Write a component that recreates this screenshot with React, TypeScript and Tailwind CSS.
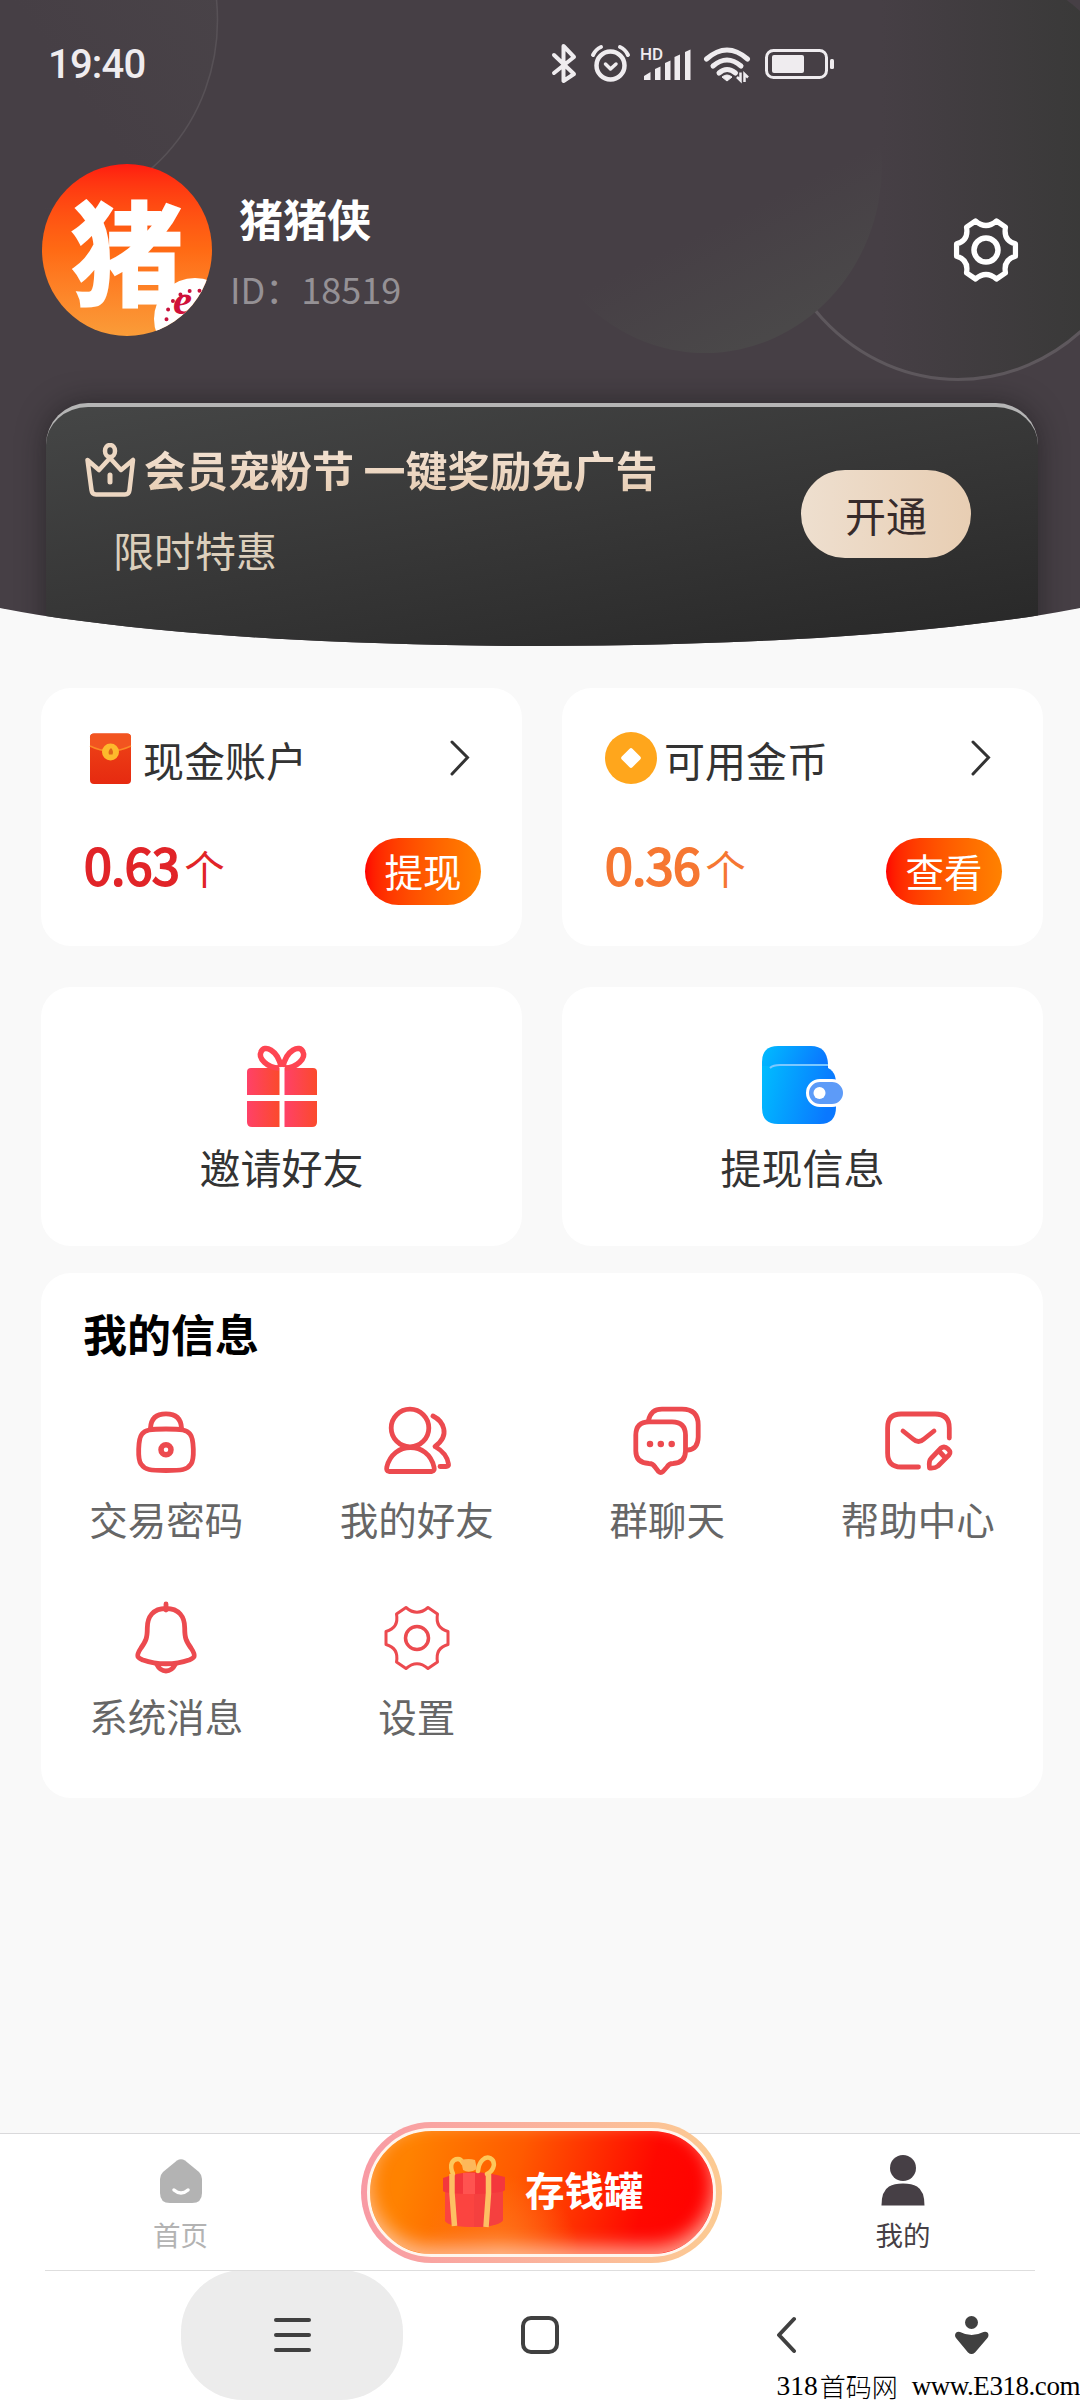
import type { ReactNode } from 'react'

const gearPath =
  'M-11 -30.5 Q0 -21 11 -30.5 L20.5 -24 Q18 -10 31 -6.5 L31 6.5 Q18 10 20.5 24 L11 30.5 Q0 21 -11 30.5 L-20.5 24 Q-18 10 -31 6.5 L-31 -6.5 Q-18 -10 -20.5 -24 Z'

function StatusBar() {
  return (
    <div className="flex h-32 items-center pl-[48px]">
      <span className="mt-[2px] w-[502px] font-['Roboto'] text-[40px] font-medium tracking-[-0.8px] text-[#efecef]">
        19:40
      </span>
      <svg width="290" height="40" viewBox="550 44 290 40" fill="none" stroke="#efecef">
        <path
          d="M554 55 L574 74 L563.5 81 V46 L574 57 L554 73"
          strokeWidth="4"
          strokeLinejoin="round"
          strokeLinecap="round"
        />
        <circle cx="610.5" cy="65.5" r="14" strokeWidth="4.5" />
        <path d="M605.5 64 l5 5 5.5-5" strokeWidth="3.5" strokeLinecap="round" strokeLinejoin="round" />
        <path d="M593 55 q3-6 8-8 M628 55 q-3-6-8-8" strokeWidth="4" strokeLinecap="round" />
        <text
          x="640"
          y="60"
          fill="#efecef"
          stroke="none"
          fontFamily="Roboto"
          fontWeight="500"
          fontSize="17"
        >
          HD
        </text>
        <g fill="#efecef" stroke="none">
          <path d="M644 80 v-4 l6.5-4 v8z" />
          <path d="M655 80 v-11 l5.5-2.500 v13.5z" />
          <path d="M665 80 v-17 l5.5-2.500 v19.5z" />
          <path d="M674.500 80 v-23 l5.500-2.500 v25.500z" />
          <path d="M685 80 v-28 l5.500-2.500 v30.500z" />
        </g>
        <g strokeWidth="5" strokeLinecap="round">
          <path d="M706.500 59 Q727 41 747.500 59" />
          <path d="M713 66 Q727 54 741 66" />
          <path d="M719 73 Q727 66 735.500 73" />
        </g>
        <path d="M722 77 q5-4 10 0 l-5 4z" fill="#efecef" strokeWidth="1" />
        <path d="M737 77 l3.500 3.500 v-8 M744.500 82 v-8 l3.500 3.500" strokeWidth="2.500" />
        <rect x="766.500" y="50.500" width="60" height="27" rx="7" strokeWidth="3" />
        <rect x="772" y="55" width="32" height="18" rx="2" fill="#efecef" stroke="none" />
        <rect x="830" y="59" width="4" height="10" rx="1.500" fill="#efecef" stroke="none" />
      </svg>
    </div>
  )
}

function HeaderCircles() {
  return (
    <svg className="absolute top-0 left-[108px]" width="1080" height="400" fill="none">
      <defs>
        <linearGradient id="circleRight" x1="0.3" x2="0.85" y1="0" y2="0">
          <stop offset="0" stopColor="#463f45" />
          <stop offset="1" stopColor="#393938" />
        </linearGradient>
        <linearGradient id="circleMid" gradientUnits="userSpaceOnUse" x1="735" x2="790" y1="215" y2="325">
          <stop offset="0" stopColor="#463f45" />
          <stop offset="1" stopColor="#4a4849" />
        </linearGradient>
        <linearGradient id="circleLeft" x1="0.6" x2="1" y1="0.7" y2="0.4">
          <stop offset="0" stopColor="#463f45" />
          <stop offset="1" stopColor="#494348" />
        </linearGradient>
        <linearGradient id="leftRingFade" x1="0.5" x2="0.8" y1="0" y2="0">
          <stop offset="0" stopColor="#575156" stopOpacity="0" />
          <stop offset="1" stopColor="#575156" />
        </linearGradient>
        <linearGradient id="ringFade" x1="0" x2="0" y1="0.5" y2="0.75">
          <stop offset="0" stopColor="#5e585d" stopOpacity="0" />
          <stop offset="1" stopColor="#5e585d" />
        </linearGradient>
      </defs>
      <ellipse cx="43.500" cy="20" rx="174" ry="189" fill="url(#circleLeft)" stroke="url(#leftRingFade)" strokeWidth="1.500" />
      <ellipse cx="958" cy="171.500" rx="192" ry="208" fill="url(#circleRight)" stroke="url(#ringFade)" strokeWidth="3" />
      <ellipse cx="705" cy="165" rx="177" ry="188" fill="url(#circleMid)" />
    </svg>
  )
}

function Avatar() {
  return (
    <div className="relative flex h-[172px] w-[170px] items-center justify-center overflow-hidden rounded-[50%] bg-gradient-to-b from-[#ff1a10] via-[#ff6a14] to-[#fa9c38]">
      <span className="-mt-[4px] text-[112px] leading-none font-bold text-white [-webkit-text-stroke:3px_white]">猪</span>
      <div className="absolute top-[114px] left-[112px] h-[82px] w-[82px] rounded-full bg-white">
        <svg width="82" height="82" viewBox="0 0 82 82">
          <circle cx="41" cy="41" r="28.500" fill="none" stroke="#c8123c" strokeWidth="4" strokeDasharray="0 9.900" strokeLinecap="round" />
          <text x="19" y="36" fontFamily="Liberation Serif" fontWeight="700" fontStyle="italic" fontSize="43" fill="#d0103a">
            e
          </text>
        </svg>
      </div>
    </div>
  )
}

function Profile() {
  return (
    <div className="relative mt-9 flex h-[172px] items-center pr-[56px] pl-[42px]">
      <Avatar />
      <div className="mt-[5px] ml-[18px] flex-1">
        <h1 className="ml-[9px] text-[44px] leading-[56px] font-bold text-white">猪猪侠</h1>
        <p className="mt-[14px] text-[36px] leading-[56px] text-[#959195]">ID：18519</p>
      </div>
      <svg width="76" height="76" viewBox="-38 -38 76 76" fill="none" stroke="white" strokeWidth="5.500" strokeLinejoin="round">
        <path d={gearPath} transform="scale(.95)" />
        <circle r="12" />
      </svg>
    </div>
  )
}

function VipCard() {
  return (
    <div className="relative mx-[46px] mt-[67px] flex h-[260px] w-[992px] items-start justify-between rounded-t-[42px] border-t-[4px] border-[#b5b5b5] bg-[linear-gradient(170deg,#454646_0%,#363636_50%,#262626_100%)] pr-[67px] pl-[39px] shadow-[0_0_28px_rgba(20,20,20,0.5)]">
      <div className="pt-[36px]">
        <div className="flex h-[54px] items-center gap-[8px]">
          <svg width="51" height="54" viewBox="0 0 51 54" fill="none" stroke="#edd7c2" strokeWidth="4.500" strokeLinejoin="round">
            <path d="M2.500 17 L14 27 L25 15 L36 27 L48 17 L44.500 47 Q44 51.500 40 51.500 H11 Q7 51.500 6.500 47 Z" />
            <ellipse cx="25" cy="8" rx="5" ry="6" />
            <path d="M25 32 v7" strokeWidth="5" strokeLinecap="round" />
          </svg>
          <span className="-mt-[3px] bg-gradient-to-b from-[#f4e4d6] to-[#e6ccb2] bg-clip-text text-[42px] leading-[54px] font-bold text-transparent">
            会员宠粉节 一键奖励免广告
          </span>
        </div>
        <p className="mt-[32px] ml-[28px] text-[41px] leading-[40px] text-[#dccfbc]">限时特惠</p>
      </div>
      <button className="mt-[63px] h-[88px] w-[170px] rounded-full bg-gradient-to-r from-[#eedfcf] to-[#e8ceb3] pt-[2px] text-[41px] text-[#372b2b]">
        开通
      </button>
    </div>
  )
}

function Header() {
  return (
    <header className="relative -ml-[108px] h-[646px] w-[1296px] shrink-0 overflow-hidden bg-[#463f45] px-[108px] [border-radius:0_0_50%_50%/0_0_85px_85px]">
      <HeaderCircles />
      <div className="relative">
        <StatusBar />
        <Profile />
        <VipCard />
      </div>
    </header>
  )
}

function EnvelopeIcon() {
  return (
    <svg width="52" height="52" viewBox="0 0 52 52">
      <defs>
        <linearGradient id="env" x1="0" x2="0" y1="0" y2="1">
          <stop offset="0" stopColor="#ee4417" />
          <stop offset="1" stopColor="#e62a10" />
        </linearGradient>
      </defs>
      <rect x="6" y="1.500" width="41" height="50.500" rx="4" fill="url(#env)" />
      <path d="M6 14 V5.500 q0-4 4-4 h33 q4 0 4 4 v8.500 q-20 10-41 0z" fill="#f25420" />
      <path d="M6 14 q20 10 41 0" fill="none" stroke="#fb8a26" strokeWidth="1.500" />
      <circle cx="26.500" cy="20" r="8.500" fill="#fdb92c" />
      <path d="M27 16 q3 3 1.500 6.500 h-3.500 q-1.500-3.500 2-6.500" fill="#e0661a" />
    </svg>
  )
}

function CoinIcon() {
  return (
    <svg width="52" height="52" viewBox="0 0 52 52">
      <circle cx="26" cy="26" r="26" fill="#ffa61c" />
      <rect x="18.500" y="18.500" width="15" height="15" rx="2" fill="white" transform="rotate(45 26 26)" />
    </svg>
  )
}

interface AccountCardProps {
  icon: ReactNode
  label: string
  amount: string
  action: string
  color: string
}

function AccountCard({ icon, label, amount, action, color }: AccountCardProps) {
  return (
    <section className="h-[258px] rounded-[30px] bg-white pt-[44px] pr-[41px] pl-[43px]">
      <div className="flex h-[52px] items-center">
        {icon}
        <span className="mt-[2px] ml-[7px] flex-1 text-[41px] leading-[52px] text-[#333]">{label}</span>
        <svg className="mr-[11px]" width="20" height="36" viewBox="0 0 20 36" fill="none" stroke="#333" strokeWidth="3">
          <path d="M2 2 L17.500 17.500 L2 34" strokeLinecap="round" />
        </svg>
      </div>
      <div className="mt-[54px] flex h-[67px] justify-between">
        <div className={`-mt-[8px] flex items-baseline gap-[5px] ${color}`}>
          <span className="text-[50px] leading-[67px] tracking-[-0.5px] [-webkit-text-stroke:2px_currentColor]">
            {amount}
          </span>
          <span className="text-[40.500px] leading-[67px]">个</span>
        </div>
        <button className="h-[67px] w-[116px] rounded-full bg-gradient-to-r from-[#ff0000] to-[#ff8200] pb-[2px] text-[38.500px] leading-[65px] text-white">
          {action}
        </button>
      </div>
    </section>
  )
}

function GiftIcon() {
  return (
    <svg width="72" height="82" viewBox="0 0 72 82">
      <defs>
        <linearGradient id="gift" x1="0" x2="1" y1="0" y2="0">
          <stop offset="0" stopColor="#ff4168" />
          <stop offset="1" stopColor="#fb4a2c" />
        </linearGradient>
      </defs>
      <g fill="url(#gift)">
        <path d="M5 23 H33.500 V50 H1 V27 q0-4 4-4z" />
        <path d="M38.500 23 H67 q4 0 4 4 V50 H38.500z" />
        <path d="M1 56 H33.500 V82 H6 q-5 0-5-5z" />
        <path d="M38.500 56 H71 V77 q0 5-5 5 H38.500z" />
      </g>
      <g fill="none" stroke="#fe4552" strokeWidth="5.500">
        <path d="M33 23 C21 23 12 13 15 7 C18 -1 32 5 35 22" />
        <path d="M37 22 C40 5 54 -1 57 7 C60 13 51 23 39 23" />
      </g>
    </svg>
  )
}

function WalletIcon() {
  return (
    <svg width="86" height="82" viewBox="-1 0 86 82">
      <defs>
        <linearGradient id="wallet" x1="0" x2="1" y1="0" y2="0.2">
          <stop offset="0" stopColor="#00bdff" />
          <stop offset="1" stopColor="#0a78ff" />
        </linearGradient>
      </defs>
      <path d="M17 1 H50 Q66 1 67 19 V30 H1 V17 Q1 1 17 1z" fill="url(#wallet)" />
      <path d="M1 21 H60 Q75 23 75 38 V62 Q75 79 59 79 H17 Q1 79 1 63z" fill="url(#wallet)" />
      <path d="M9 23 q3-3 10-3 H67" fill="none" stroke="#7cc8ff" strokeWidth="2" />
      <rect x="46.500" y="35.500" width="37" height="25" rx="12.500" fill="#5d9bf8" stroke="white" strokeWidth="3" />
      <circle cx="58.500" cy="48" r="6" fill="white" />
    </svg>
  )
}

function ShortcutCard({ icon, label }: { icon: ReactNode; label: string }) {
  return (
    <section className="flex h-[259px] flex-col items-center rounded-[30px] bg-white pt-[58px]">
      {icon}
      <span className="mt-[14px] text-[41px] leading-[50px] text-[#333]">{label}</span>
    </section>
  )
}

const menu: { label: string; icon: ReactNode }[] = [
  {
    label: '交易密码',
    icon: (
      <>
        <path d="M24.500 27 C25 17 31 12.800 40 12.800 S55 17 55.500 27" />
        <path d="M40 28 C56 28 61 29 64 33 C68 38 68.500 58 65 63 C61 69 56 69.500 40 69.500 S19 69 15 63 C11.500 58 12 38 16 33 C19 29 24 28 40 28z" />
        <circle cx="40" cy="48.700" r="5" strokeWidth="5.500" />
      </>
    ),
  },
  {
    label: '我的好友',
    icon: (
      <>
        <circle cx="33" cy="27" r="18.800" />
        <path d="M12 70.500 H55 Q58 70 57 66 C54 53 44 46.500 33.500 46.500 S13 53 9.800 66 Q9 70 12 70.500z" />
        <path d="M56 15 C66 20 74 34 58 45.500 C66 50 70.500 56 71.500 63 Q72 65.500 69 65.500 H63" />
      </>
    ),
  },
  {
    label: '群聊天',
    icon: (
      <>
        <path d="M21.500 19.500 C23 12 27 8.200 35 8.200 H55 Q71.200 8.200 71.200 24 V36 Q71 48 61 49" />
        <path d="M22 20.800 H45 Q58.500 21 58.500 34 V50 Q58.500 62 46 62.500 Q42 62.500 40 66 L36 70.500 Q33.700 72.500 31.500 70.500 L28 66 Q26 62.500 22 62.500 Q8.800 62 8.800 50 V34 Q8.800 21 22 20.800z" />
        <path d="M23 43 h0 M33.800 43 h0 M44.700 43 h0" strokeWidth="6.500" />
      </>
    ),
  },
  {
    label: '帮助中心',
    icon: (
      <>
        <path d="M71.300 37 V27 Q71.300 13 57 13 H23 Q9.600 13 9.600 27 V52 Q9.600 66 23 66 H40.500" />
        <path d="M25 30 L35 38 Q40.500 43 46 38 L56 30" />
        <path d="M51.500 67 Q50.500 60 53 57.500 L63 47 Q66.500 44.500 70 48 T71 54 L60 65 Q57 67.500 51.500 67z M61 50 L67.500 57" />
      </>
    ),
  },
  {
    label: '系统消息',
    icon: (
      <>
        <path d="M40 6 V12 M40 10.500 C27 10.500 21.300 19 21.300 30 C21.300 40 20 43 15 50 C9 59 12 60 17 62 C31 67 49 67 63 62 C68 60 71 59 65 50 C60 43 58.700 40 58.700 30 C58.700 19 53 10.500 40 10.500z" />
        <path d="M30.500 66 Q34 73 40 73 T49.500 66" />
      </>
    ),
  },
  {
    label: '设置',
    icon: (
      <g strokeWidth="3" transform="translate(40 40)">
        <path d={gearPath} />
        <circle r="11.500" strokeWidth="3.500" />
      </g>
    ),
  },
]

function MyInfo() {
  return (
    <section className="mt-[27px] h-[525px] rounded-[30px] bg-white">
      <h2 className="pt-[35px] pl-[42px] text-[44px] leading-[50px] font-bold text-black">我的信息</h2>
      <div className="mt-[43px] grid grid-cols-4">
        {menu.map((item) => (
          <div key={item.label} className="flex h-[197px] flex-col items-center">
            <svg
              width="80"
              height="80"
              viewBox="0 0 80 80"
              fill="none"
              stroke="#ec4a4f"
              strokeWidth="4.800"
              strokeLinecap="round"
              strokeLinejoin="round"
            >
              {item.icon}
            </svg>
            <span className="mt-[12px] text-[38.500px] leading-[50px] text-[#666]">{item.label}</span>
          </div>
        ))}
      </div>
    </section>
  )
}

function PiggyButton() {
  return (
    <button className="z-10 -mt-[12px] h-[141px] w-[361px] rounded-full bg-gradient-to-r from-[#f89aa4] to-[#fccb92] p-[6px]">
      <div className="flex h-[129px] items-center rounded-full border-[3px] border-[#fff6ee] bg-[radial-gradient(circle_at_38%_100%,rgba(255,130,40,0.8),transparent_32%),linear-gradient(105deg,#ff8200_12%,#ff5a00_42%,#ff0800_78%,#ff0000_100%)] pl-[71px] shadow-[inset_0_-8px_18px_rgba(255,205,180,0.75)]">
        <svg width="66" height="76" viewBox="0 0 66 76">
          <path d="M4 34 H62 V65 Q58 71 34 72 Q8 72 4 66z" fill="#fb4440" />
          <path d="M33 34 H62 V65 Q60 70 42 72 H33z" fill="#f5403f" />
          <path d="M2 23 Q30 12 64 22 V35 Q62 38 34 39 Q4 39 2 36z" fill="#f4373c" />
          <path d="M22 18 H34 V39 H22z" fill="#ff5350" />
          <g fill="none" stroke="#fdc75a" strokeWidth="4.500" strokeLinecap="round">
            <path d="M12 19 C8 10 11 4 17 4 Q20 4 22 8" />
            <path d="M37 16 C38 6 44 1 49 3 C55 6 54 15 46 19" />
          </g>
          <path d="M20 5 Q28 3 34 5 L36 14 Q28 19 22 15z" fill="#fdb85a" />
          <path d="M11 19 V38 L13.500 71 M47.500 19 V38 L45 72" fill="none" stroke="#fdc063" strokeWidth="5.500" />
        </svg>
        <span className="-mt-[7px] ml-[18px] text-[39.500px] leading-[60px] font-bold text-white">存钱罐</span>
      </div>
    </button>
  )
}

function TabBar() {
  return (
    <nav className="grid h-[137px] grid-cols-[361px_361px_361px] border-t border-[#d9d9db] bg-white">
      <div className="flex flex-col items-center pt-[25px]">
        <svg width="44" height="45" viewBox="0 0 44 45">
          <path d="M18 1.500 Q22 -1 26 1.500 L40 13 Q43 16 43 20 V34 Q43 44 33 44 H11 Q1 44 1 34 V20 Q1 16 4 13z" fill="#b3b3b3" />
          <path d="M15 31 Q22 37 29 31" fill="none" stroke="white" strokeWidth="3.500" strokeLinecap="round" />
        </svg>
        <span className="mt-[12px] text-[27.500px] leading-[36px] text-[#b3b3b3]">首页</span>
      </div>
      <PiggyButton />
      <div className="flex flex-col items-center pt-[21px] pl-[1px]">
        <svg width="44" height="51" viewBox="0 0 44 51" fill="#463f45">
          <circle cx="22" cy="13" r="13" />
          <path d="M0.500 50.500 Q0.500 36 8 31.500 Q13 28.500 22 28.500 T36 31.500 Q43.500 36 43.500 50.500z" />
        </svg>
        <span className="mt-[10px] text-[27.500px] leading-[36px] text-[#463f45]">我的</span>
      </div>
    </nav>
  )
}

function SystemNav() {
  return (
    <div className="relative h-[130px] bg-white">
      <div className="absolute top-0 left-[45px] h-px w-[990px] bg-[#dedede]" />
      <div className="flex h-full items-center pl-[181px]">
        <div className="flex h-full w-[222px] items-center justify-center rounded-[62px] bg-[#ececec]">
          <div className="flex flex-col gap-[11px]">
            <div className="h-1 w-[37px] rounded bg-[#404040]" />
            <div className="h-1 w-[37px] rounded bg-[#404040]" />
            <div className="h-1 w-[37px] rounded bg-[#404040]" />
          </div>
        </div>
        <div className="ml-[118px] h-[38px] w-[38px] rounded-[10px] border-4 border-[#404040]" />
        <svg className="ml-[218px]" width="22" height="38" viewBox="0 0 22 38" fill="none" stroke="#404040" strokeWidth="4">
          <path d="M17 3 L2 19 L17 35" strokeLinecap="round" strokeLinejoin="round" />
        </svg>
        <svg className="ml-[156px]" width="34" height="38" viewBox="0 0 34 38" fill="#404040">
          <circle cx="16.500" cy="6.500" r="6.500" />
          <path d="M0 19 Q1 15 5 16 Q16.500 22 28.500 16 Q33 15 33.500 19 Q33.500 21 32 22.500 L20 36.500 Q16.500 39.500 13 36.500 L1 22 Q0 21 0 19z" />
        </svg>
      </div>
      <p className="absolute right-0 bottom-0 flex items-center leading-[28px] text-black">
        <span className="font-['Liberation_Serif'] text-[27.500px]">318</span>
        <span className="ml-[2px] text-[26px] leading-[28px] font-light">首码网</span>
        <span className="ml-[14px] font-['Liberation_Serif'] text-[27px] tracking-[-0.450px]">www.E318.com</span>
      </p>
    </div>
  )
}

export default function App() {
  return (
    <div className="flex h-[2400px] w-[1080px] flex-col overflow-hidden bg-[#f9f9f9] font-['Noto_Sans_CJK_SC',sans-serif]">
      <Header />
      <main className="flex-1 pt-[42px] pr-[37px] pl-[41px]">
        <div className="grid grid-cols-2 gap-x-[40px] gap-y-[41px]">
          <AccountCard icon={<EnvelopeIcon />} label="现金账户" amount="0.63" action="提现" color="text-[#e12428]" />
          <AccountCard icon={<CoinIcon />} label="可用金币" amount="0.36" action="查看" color="text-[#f67732]" />
          <ShortcutCard icon={<GiftIcon />} label="邀请好友" />
          <ShortcutCard icon={<WalletIcon />} label="提现信息" />
        </div>
        <MyInfo />
      </main>
      <TabBar />
      <SystemNav />
    </div>
  )
}
